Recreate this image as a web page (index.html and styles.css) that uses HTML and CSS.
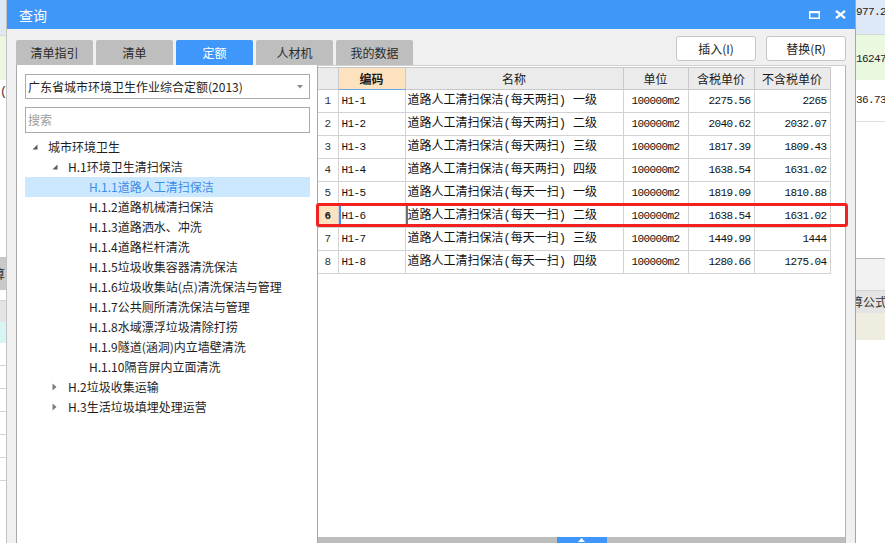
FILE: index.html
```html
<!DOCTYPE html>
<html lang="zh-CN">
<head>
<meta charset="utf-8">
<title>查询</title>
<link rel="stylesheet" href="styles.css">
</head>
<body>
<div class="screen">
  <div class="bg-left">
    <div class="bgl bgl-blue"></div>
    <div class="bgl bgl-green"></div>
    <div class="bgl bgl-white1"><span class="bg-txt">(</span></div>
    <div class="bgl bgl-white2"></div>
    <div class="bgl bgl-gray"><span class="bg-cut">算</span></div>
    <div class="bgl bgl-white3"></div>
    <div class="bgl bgl-lgray"></div>
    <div class="bgl bgl-cyan"></div>
    <div class="bgl bgl-row"></div>
    <div class="bgl bgl-row"></div>
    <div class="bgl bgl-row"></div>
    <div class="bgl bgl-row"></div>
    <div class="bgl bgl-row"></div>
    <div class="bgl bgl-row"></div>
  </div>

  <div class="dialog">
    <div class="titlebar">
      <span class="title">查询</span>
      <div class="win-btns">
        <svg class="ico-max" width="11" height="8" viewBox="0 0 11 8"><rect x="0.75" y="1" width="9.5" height="6.25" fill="none" stroke="#fff" stroke-width="1.5"/><rect x="0" y="0" width="11" height="2.2" fill="#fff"/></svg>
        <svg class="ico-close" width="11" height="9" viewBox="0 0 11 9"><path d="M1 0.8 L10 8.2 M10 0.8 L1 8.2" stroke="#fff" stroke-width="2.2" fill="none"/></svg>
      </div>
    </div>

    <div class="dlg-body">
      <div class="toolbar">
        <div class="tabs">
          <div class="tab">清单指引</div>
          <div class="tab">清单</div>
          <div class="tab active">定额</div>
          <div class="tab">人材机</div>
          <div class="tab">我的数据</div>
        </div>
        <div class="actions">
          <button class="btn">插入(I)</button>
          <button class="btn">替换(R)</button>
        </div>
      </div>

      <div class="main">
        <div class="left-panel">
          <div class="combo">
            <span class="combo-text">广东省城市环境卫生作业综合定额(2013)</span>
            <svg class="combo-arrow" width="6" height="4" viewBox="0 0 6 4"><path d="M0 0 H6 L3 3.5 Z" fill="#8a8a8a"/></svg>
          </div>
          <div class="search">搜索</div>
          <ul class="tree">
            <li class="node lv0"><span class="tog"><svg width="6" height="6" viewBox="0 0 6 6"><path d="M5.5 0.5 V5.5 H0.5 Z" fill="#595959"/></svg></span>城市环境卫生</li>
            <li class="node lv1"><span class="tog"><svg width="6" height="6" viewBox="0 0 6 6"><path d="M5.5 0.5 V5.5 H0.5 Z" fill="#595959"/></svg></span>H.1环境卫生清扫保洁</li>
            <li class="node lv2 selected">H.1.1道路人工清扫保洁</li>
            <li class="node lv2">H.1.2道路机械清扫保洁</li>
            <li class="node lv2">H.1.3道路洒水、冲洗</li>
            <li class="node lv2">H.1.4道路栏杆清洗</li>
            <li class="node lv2">H.1.5垃圾收集容器清洗保洁</li>
            <li class="node lv2">H.1.6垃圾收集站(点)清洗保洁与管理</li>
            <li class="node lv2">H.1.7公共厕所清洗保洁与管理</li>
            <li class="node lv2">H.1.8水域漂浮垃圾清除打捞</li>
            <li class="node lv2">H.1.9隧道(涵洞)内立墙壁清洗</li>
            <li class="node lv2">H.1.10隔音屏内立面清洗</li>
            <li class="node lv1"><span class="tog"><svg width="5" height="8" viewBox="0 0 5 8"><path d="M0.5 0.5 L4.5 4 L0.5 7.5 Z" fill="#7a7a7a"/></svg></span>H.2垃圾收集运输</li>
            <li class="node lv1"><span class="tog"><svg width="5" height="8" viewBox="0 0 5 8"><path d="M0.5 0.5 L4.5 4 L0.5 7.5 Z" fill="#7a7a7a"/></svg></span>H.3生活垃圾填埋处理运营</li>
          </ul>
        </div>

        <div class="right-panel">
          <div class="grid-wrap">
            <table class="grid">
              <colgroup>
                <col class="c-no"><col class="c-code"><col class="c-name"><col class="c-unit"><col class="c-tax"><col class="c-notax">
              </colgroup>
              <thead>
                <tr>
                  <th class="h-no"></th>
                  <th class="h-code">编码</th>
                  <th>名称</th>
                  <th>单位</th>
                  <th>含税单价</th>
                  <th>不含税单价</th>
                </tr>
              </thead>
              <tbody>
                <tr><td class="no">1</td><td class="code">H1-1</td><td class="name">道路人工清扫保洁(每天两扫) 一级</td><td class="unit">100000m2</td><td class="num">2275.56</td><td class="num">2265</td></tr>
                <tr><td class="no">2</td><td class="code">H1-2</td><td class="name">道路人工清扫保洁(每天两扫) 二级</td><td class="unit">100000m2</td><td class="num">2040.62</td><td class="num">2032.07</td></tr>
                <tr><td class="no">3</td><td class="code">H1-3</td><td class="name">道路人工清扫保洁(每天两扫) 三级</td><td class="unit">100000m2</td><td class="num">1817.39</td><td class="num">1809.43</td></tr>
                <tr><td class="no">4</td><td class="code">H1-4</td><td class="name">道路人工清扫保洁(每天两扫) 四级</td><td class="unit">100000m2</td><td class="num">1638.54</td><td class="num">1631.02</td></tr>
                <tr><td class="no">5</td><td class="code">H1-5</td><td class="name">道路人工清扫保洁(每天一扫) 一级</td><td class="unit">100000m2</td><td class="num">1819.09</td><td class="num">1810.88</td></tr>
                <tr class="current"><td class="no">6</td><td class="code">H1-6</td><td class="name">道路人工清扫保洁(每天一扫) 二级</td><td class="unit">100000m2</td><td class="num">1638.54</td><td class="num">1631.02</td></tr>
                <tr><td class="no">7</td><td class="code">H1-7</td><td class="name">道路人工清扫保洁(每天一扫) 三级</td><td class="unit">100000m2</td><td class="num">1449.99</td><td class="num">1444</td></tr>
                <tr><td class="no">8</td><td class="code">H1-8</td><td class="name">道路人工清扫保洁(每天一扫) 四级</td><td class="unit">100000m2</td><td class="num">1280.66</td><td class="num">1275.04</td></tr>
              </tbody>
            </table>
          </div>
          <div class="bottom-bar"><span class="handle"><svg width="7" height="4" viewBox="0 0 7 4"><path d="M3.5 0 L7 4 H0 Z" fill="#fff"/></svg></span></div>
          <div class="annot"></div>
        </div>
      </div>
    </div>
  </div>

  <div class="bg-right">
    <div class="bgr bgr-blue"><span class="bg-num">977.2</span></div>
    <div class="bgr bgr-green"><span class="bg-num">16247</span></div>
    <div class="bgr bgr-white1"><span class="bg-num">36.73</span></div>
    <div class="bgr bgr-white2"></div>
    <div class="bgr bgr-lgray"></div>
    <div class="bgr bgr-head"><span class="bg-head">算公式</span></div>
    <div class="bgr bgr-beige"></div>
    <div class="bgr bgr-rest"></div>
  </div>
</div>
</body>
</html>
```

FILE: styles.css
```css
* { box-sizing: border-box; margin: 0; padding: 0; }

body {
  margin: 0;
  font-family: "Noto Sans CJK SC", "Microsoft YaHei", sans-serif;
  font-size: 12px;
  color: #222;
  background: #fff;
}

.screen {
  display: flex;
  width: 885px;
  height: 543px;
  overflow: hidden;
}

/* ---------- background application (left strip) ---------- */
.bg-left {
  width: 6px;
  flex: none;
  display: flex;
  flex-direction: column;
  overflow: hidden;
}
.bgl { flex: none; overflow: hidden; white-space: nowrap; }
.bgl-blue { height: 35px; background: #dfe9f6; }
.bgl-green { height: 45px; background: #ecf7e2; border-top: 1px solid #d2dccc; }
.bgl-white1 { height: 24px; background: #fff; line-height: 20px; }
.bgl-white2 { height: 154px; background: #fff; border-bottom: 1px solid #c4c4c4; }
.bgl-gray { height: 32px; background: #c9c9c9; line-height: 32px; }
.bgl-white3 { height: 10px; background: #fff; }
.bgl-lgray { height: 22px; background: #e4e4e4; border-top: 1px solid #d0d0d0; }
.bgl-cyan { height: 21px; background: #d7f5f5; }
.bgl-row { height: 23px; background: #fff; border-bottom: 1px solid #d4d4d4; }
.bg-txt { font-family: "Liberation Mono", monospace; font-size: 12px; color: #333; }
.bg-cut { display: inline-block; margin-left: -7px; font-size: 12px; color: #333; }

/* ---------- dialog ---------- */
.dialog {
  width: 850px;
  flex: none;
  display: flex;
  flex-direction: column;
  background: #f0f0f0;
  border-left: 1px solid #c3c3c3;
  border-right: 1px solid #a6a6a6;
}

.titlebar {
  height: 29px;
  flex: none;
  background: #3f97f8;
  color: #fff;
  display: flex;
  align-items: center;
  justify-content: space-between;
  padding: 0 9px 0 12px;
}
.title { font-size: 14px; line-height: 18px; }
.win-btns { display: flex; align-items: center; gap: 15px; }
.ico-max { display: block; margin-top: 1px; }
.ico-close { display: block; }

.dlg-body {
  flex: 1;
  display: flex;
  flex-direction: column;
  padding: 7px 9px 0 9px;
}

.toolbar {
  height: 29px;
  flex: none;
  display: flex;
  justify-content: space-between;
  align-items: flex-end;
}
.tabs { display: flex; gap: 3px; }
.tab {
  width: 77px;
  height: 25px;
  background: #bebebe;
  border-radius: 2px 2px 0 0;
  display: flex;
  align-items: center;
  justify-content: center;
  color: #2a2a2a;
  font-size: 12px;
}
.tab.active { background: #3f98f9; color: #fff; }

.actions { display: flex; gap: 10px; align-self: flex-start; }
.btn {
  width: 80px;
  height: 25px;
  background: #fff;
  border: 1px solid #c6c6c6;
  border-radius: 3px;
  font-family: inherit;
  font-size: 12px;
  color: #222;
}

.main {
  height: 478px;
  flex: none;
  display: flex;
}

/* ---------- left panel ---------- */
.left-panel {
  width: 301px;
  flex: none;
  background: #fff;
  border-left: 1px solid #a9a9a9;
  padding: 9px 7px 0 8px;
}
.combo {
  height: 25px;
  border: 1px solid #ababab;
  background: #fff;
  display: flex;
  align-items: center;
  justify-content: space-between;
  padding: 0 6px 0 2px;
}
.combo-text { line-height: 18px; color: #1e1e1e; }
.combo-arrow { display: block; }
.search {
  height: 26px;
  margin-top: 8px;
  border: 1px solid #ababab;
  padding-left: 2px;
  line-height: 24px;
  color: #9c9c9c;
}
.tree { list-style: none; margin-top: 4px; }
.node {
  height: 20px;
  line-height: 20px;
  display: flex;
  align-items: center;
  white-space: nowrap;
  color: #1e1e1e;
}
.node.lv0 { padding-left: 7px; }
.node.lv1 { padding-left: 27px; }
.node.lv2 { padding-left: 64px; }
.node.selected { background: #cce8ff; color: #3a8ee8; }
.tog {
  width: 16px;
  flex: none;
  display: flex;
  align-items: center;
}
.tog svg { display: block; }

/* ---------- right panel ---------- */
.right-panel {
  position: relative;
  width: 529px;
  flex: none;
  background: #fff;
  border-left: 1px solid #a9a9a9;
  border-top: 1px solid #d0d0d0;
  border-right: 1px solid #b4b4b4;
  display: flex;
  flex-direction: column;
}
.grid-wrap { flex: 1; padding-top: 1px; }

.grid {
  border-collapse: collapse;
  table-layout: fixed;
  width: 512px;
}
.c-no { width: 20px; }
.c-code { width: 67px; }
.c-name { width: 218px; }
.c-unit { width: 65px; }
.c-tax { width: 66px; }
.c-notax { width: 76px; }

.grid th {
  height: 22px;
  padding: 0;
  background: #ebebeb;
  border: 1px solid #c9c9c9;
  font-weight: normal;
  font-size: 12px;
  color: #1a1a1a;
  text-align: center;
  line-height: 20px;
}
.grid th:first-child { border-left: none; }
.grid th.h-code {
  background: #fde2c0;
  font-weight: bold;
  border-bottom: 1px solid #6aa8ea;
}

.grid td {
  height: 23px;
  padding: 0 2px;
  border: 1px solid #d3d3d3;
  color: #111;
  white-space: nowrap;
  overflow: hidden;
  line-height: 21px;
}
.grid td:first-child { border-left: none; }

.grid td.no {
  text-align: center;
  padding: 0;
  font-family: "Liberation Mono", monospace;
  font-size: 11px;
  color: #333;
}
.grid td.code {
  font-family: "Liberation Mono", monospace;
  font-size: 11px;
  letter-spacing: -0.6px;
  padding-left: 3px;
}
.grid td.name {
  font-family: "Liberation Mono", "Noto Sans CJK SC", monospace;
  font-size: 12px;
  padding-left: 2px;
}
.grid td.unit {
  text-align: center;
  font-family: "Liberation Mono", monospace;
  font-size: 11px;
  letter-spacing: -0.6px;
}
.grid td.num {
  text-align: right;
  font-family: "Liberation Mono", monospace;
  font-size: 11px;
  letter-spacing: -0.6px;
  padding-right: 3px;
}

.grid tr.current td.no {
  background: #fde2c0;
  font-weight: bold;
  color: #1a1a1a;
}
.grid tr.current td.code { box-shadow: inset 2px 0 0 #3d8ef0; }
.grid tr.current td.name { box-shadow: inset 2px 0 0 #707070; }

.bottom-bar {
  height: 6px;
  flex: none;
  background: #bdbdbd;
  display: flex;
  justify-content: center;
}
.handle {
  width: 50px;
  height: 6px;
  background: #3f98f9;
  display: flex;
  justify-content: center;
  align-items: flex-start;
  padding-top: 1px;
}
.handle svg { display: block; }

.annot {
  position: absolute;
  left: -2px;
  top: 137px;
  width: 532px;
  height: 24px;
  border: 3px solid #f2201e;
  border-radius: 3px;
  pointer-events: none;
}

/* ---------- background application (right strip) ---------- */
.bg-right {
  flex: 1;
  display: flex;
  flex-direction: column;
  overflow: hidden;
}
.bgr { flex: none; overflow: hidden; white-space: nowrap; }
.bgr-blue { height: 34px; background: #dee9f7; padding-top: 4px; }
.bgr-green { height: 46px; background: #ebf8e0; padding-top: 16px; border-top: 1px solid #d0dccc; }
.bgr-white1 { height: 42px; background: #fff; padding-top: 12px; border-bottom: 1px solid #dedede; }
.bgr-white2 { height: 137px; background: #fff; border-bottom: 1px solid #b9b9b9; }
.bgr-lgray { height: 31px; background: #f2f2f2; }
.bgr-head { height: 23px; background: #e4e4e4; border-top: 1px solid #d4d4d4; line-height: 22px; }
.bgr-beige { height: 27px; background: #efede0; }
.bgr-rest { height: 220px; background: #fff; }
.bg-num {
  display: block;
  font-family: "Liberation Mono", monospace;
  font-size: 11px;
  letter-spacing: -0.6px;
  color: #222;
  line-height: 16px;
}
.bg-head { display: inline-block; margin-left: -5px; font-size: 12px; color: #333; }
```
